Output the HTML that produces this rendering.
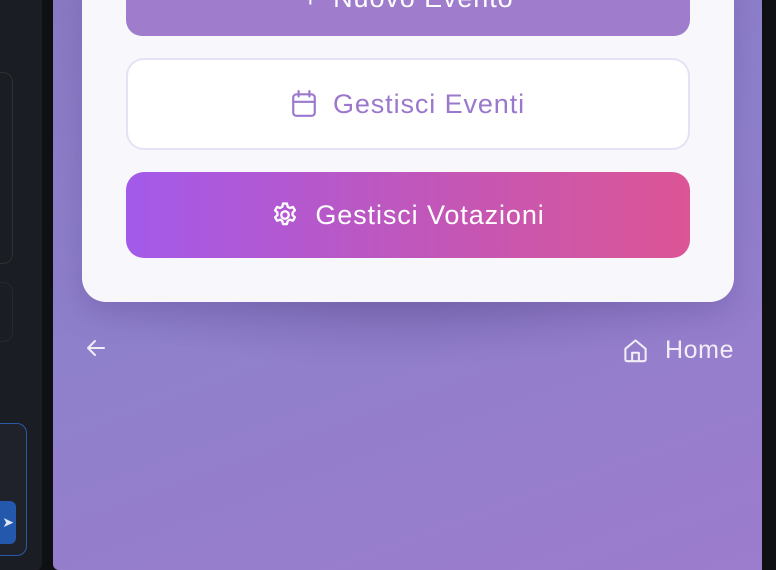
<!DOCTYPE html>
<html><head><meta charset="utf-8"><style>
*{margin:0;padding:0;box-sizing:border-box}
body{width:776px;height:570px;overflow:hidden;background:#0f1013;font-family:"Liberation Sans",sans-serif;position:relative}
.left{position:absolute;left:0;top:0;width:42px;height:570px;background:#1a1d23;border-radius:0 0 6px 0}
.lb{position:absolute;border-radius:10px}
.main{position:absolute;left:53px;top:0;width:709px;height:570px;border-radius:0 0 0 6px;
background:linear-gradient(160deg,#8a7ac4 0%,#8f80cc 45%,#9c7ccc 100%)}
.shadow{position:absolute;left:60px;top:200px;width:690px;height:170px;background:radial-gradient(ellipse at center,rgba(90,70,140,0.35),rgba(90,70,140,0) 70%)}
.card{position:absolute;left:82px;top:-40px;width:652px;height:342px;background:#f8f7fc;border-radius:24px;box-shadow:0 12px 30px rgba(80,60,130,0.25)}
.btn{position:absolute;left:126px;width:564px;display:flex;align-items:center;justify-content:center;font-size:27px;letter-spacing:0.9px}
.b1{top:-40px;height:76px;background:#9f7dcc;border-radius:16px;color:#fff}
.b2{top:58px;height:92px;background:#fff;border:2px solid #e3e3f5;border-radius:18px;color:#9b78cc}
.b3{top:172px;height:86px;background:linear-gradient(90deg,#a35aea,#c556b4 60%,#dc5595);border-radius:18px;color:#fff}
.btn svg{margin-right:16px}
.nav{position:absolute;top:336px;color:#f2eef8;font-size:25px;letter-spacing:0.6px;display:flex;align-items:center}
</style></head><body>
<div class="left">
 <div class="lb" style="left:-20px;top:72px;width:33px;height:192px;border:1px solid #2a3330"></div>
 <div class="lb" style="left:-20px;top:282px;width:33px;height:60px;border:1px solid #262a30"></div>
 <div class="lb" style="left:-20px;top:423px;width:47px;height:133px;border:1.5px solid #2b5aa8;background:#1f222a"></div>
 <div class="lb" style="left:-10px;top:501px;width:26px;height:43px;background:#2458ad;border-radius:6px;color:#dfe6f5;font-size:14px;line-height:43px;text-align:right;padding-right:2px">➤</div>
</div>
<div class="main"></div>
<div class="shadow"></div>
<div class="card"></div>
<div class="btn b1"><span style="margin-right:14px">+</span>Nuovo Evento</div>
<div class="btn b2"><svg width="26" height="28" viewBox="0 0 24 26" fill="none" stroke="#9b78cc" stroke-width="2" stroke-linecap="round"><rect x="2" y="4" width="20" height="20" rx="3"/><path d="M7 1v5M17 1v5M2 11h20"/></svg>Gestisci Eventi</div>
<div class="btn b3"><svg width="28" height="28" viewBox="0 0 24 24" fill="none" stroke="#fff" stroke-width="2" stroke-linejoin="round"><path d="M10.3 2.2h3.4l.6 2.7 1.9 1.1 2.6-.9 1.7 2.9-2 1.9v2.2l2 1.9-1.7 2.9-2.6-.9-1.9 1.1-.6 2.7h-3.4l-.6-2.7-1.9-1.1-2.6.9-1.7-2.9 2-1.9v-2.2l-2-1.9 1.7-2.9 2.6.9 1.9-1.1z"/><circle cx="12" cy="12" r="3.2"/></svg>Gestisci Votazioni</div>
<div class="nav" style="left:84px"><svg width="24" height="24" viewBox="0 0 24 24" fill="none" stroke="#f2eef8" stroke-width="2" stroke-linecap="round" stroke-linejoin="round"><path d="M20 12H4M11 5l-7 7 7 7"/></svg></div>
<div class="nav" style="left:622px"><svg width="27" height="27" viewBox="0 0 24 24" fill="none" stroke="#f2eef8" stroke-width="1.8" stroke-linejoin="round" style="margin-right:16px"><path d="M3 10.5 12 3l9 7.5V20a1.5 1.5 0 0 1-1.5 1.5h-15A1.5 1.5 0 0 1 3 20z"/><path d="M9 21.5V14h6v7.5"/></svg>Home</div>
</body></html>
